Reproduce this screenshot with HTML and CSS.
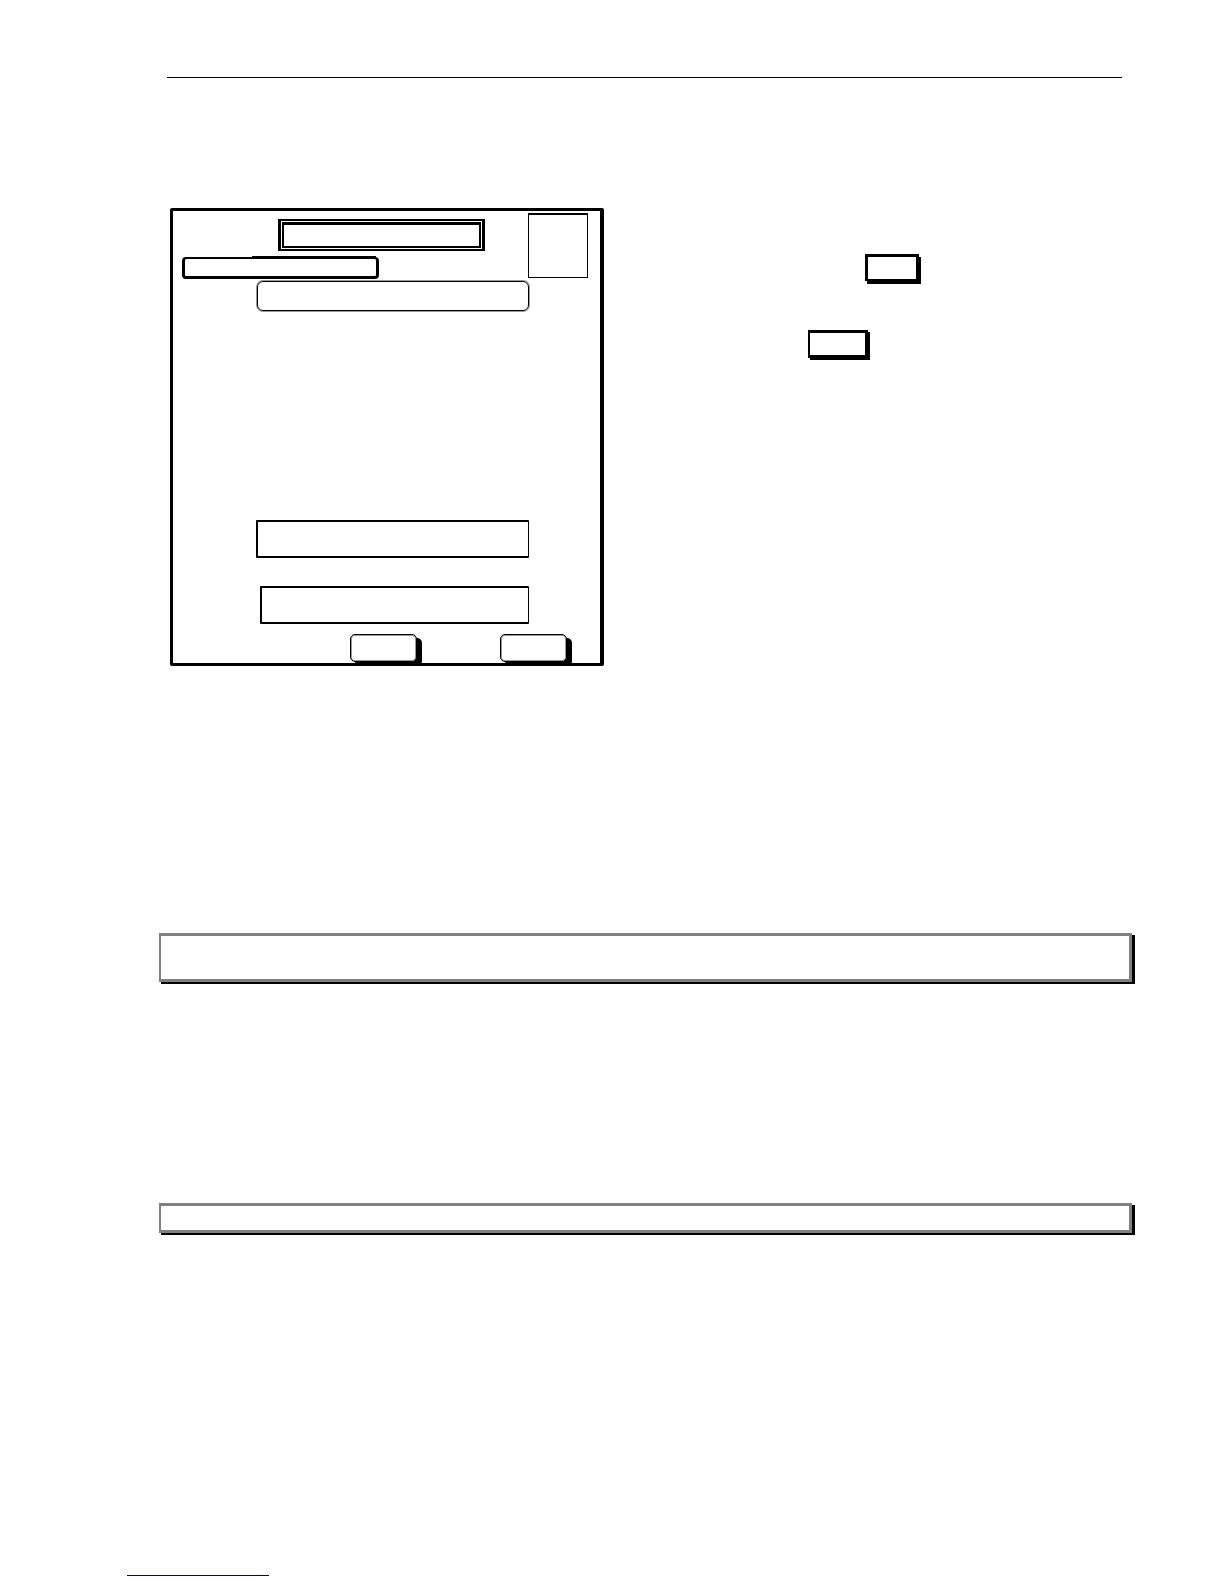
FILE: index.html
```
<!DOCTYPE html>
<html lang="en">
<head>
  <meta charset="utf-8">
  <meta name="viewport" content="width=device-width, initial-scale=1">
  <title>Operator manual</title>
  <link rel="stylesheet" href="styles.css">
</head>
<body>
  <main class="page">
    <hr class="page-rule">

    <div class="columns">
      <!-- Touch screen -->
      <section class="screen" aria-label="Screen">
        <div class="screen-head">
          <div class="head-main">
            <div class="screen-title"></div>
            <div class="screen-tab"></div>
          </div>
          <div class="screen-logo"></div>
        </div>

        <div class="screen-body">
          <div class="message"></div>
          <input class="field" type="text" aria-label="First value">
          <input class="field field-short" type="text" aria-label="Second value">
        </div>

        <div class="screen-buttons">
          <button class="soft-button" type="button" aria-label="Accept"></button>
          <button class="soft-button" type="button" aria-label="Exit"></button>
        </div>
      </section>

      <!-- Keys used in the steps -->
      <section class="steps" aria-label="Steps">
        <button class="key key-first" type="button" aria-label="First key"></button>
        <button class="key key-second" type="button" aria-label="Second key"></button>
      </section>
    </div>

    <aside class="note note-tall" aria-label="Note"></aside>
    <aside class="note" aria-label="Note"></aside>
  </main>

  <footer class="footer">
    <a class="footer-link" href="#" aria-label="Website"></a>
  </footer>
</body>
</html>
```
FILE: styles.css
```
*,
*::before {
  box-sizing: border-box;
}

body {
  margin: 0;
  background: #fff;
  color: #000;
  font-family: "Liberation Sans", Arial, sans-serif;
  font-size: 16px;
}

.page {
  padding: 77px 92px 0 159px;
}

.page-rule {
  height: 1px;
  margin: 0 10px 0 8px;
  border: 0;
  background: #000;
}

.columns {
  display: grid;
  grid-template-columns: minmax(0, 434px) minmax(0, 1fr);
  margin: 130px 10px 0 11px;
}

/* Touch screen */
.screen {
  border: 3px solid #000;
  border-right-width: 4px;
  border-radius: 2px;
}

.screen-head {
  display: flex;
  align-items: flex-start;
  padding: 2px 12px 0 9px;
}

.head-main {
  flex: 1;
  padding-top: 6px;
}

.screen-title {
  width: 207px;
  height: 32px;
  margin-left: 96px;
  padding: 1px;
  border: solid #000;
  border-width: 2px 3px;
}

/* inner frame of the title */
.screen-title::before {
  content: "";
  display: block;
  height: 100%;
  border: 2px solid #000;
  border-top-width: 3px;
}

.screen-tab {
  position: relative;
  width: 197px;
  height: 22px;
  margin-top: 6px;
  border: 3px solid #000;
  border-top-width: 2px;
  border-radius: 4px;
}

/* thicker part of the top edge */
.screen-tab::before {
  content: "";
  position: absolute;
  top: -3px;
  left: 67px;
  right: 0;
  height: 3px;
  background: #000;
}

.screen-logo {
  width: 60px;
  height: 65px;
  border: 1px solid #000;
  border-top-width: 2px;
}

.screen-body {
  display: flex;
  flex-direction: column;
  margin: 2px 71px 0 83px;
}

.message {
  height: 30px;
  margin-left: 1px;
  border: 1px solid #000;
  border-radius: 6px;
  box-shadow: 0 0 0 1px #999;
}

.field {
  height: 38px;
  margin-top: 209px;
  padding: 0 8px;
  border: 2px solid #000;
  border-right-width: 1px;
  border-radius: 1px;
  background: #fff;
  font: inherit;
}

.field-short {
  margin-top: 28px;
  margin-left: 4px;
}

.screen-buttons {
  display: flex;
  justify-content: flex-end;
  gap: 83px;
  padding: 10px 33px 1px 0;
}

.soft-button {
  width: 67px;
  height: 28px;
  padding: 0;
  border: 1px solid #000;
  border-radius: 5px;
  background: #fff;
  box-shadow: inset 0 0 0 1px #999, 5px 4px 0 #000;
}

/* Keys */
.steps {
  display: flex;
  flex-direction: column;
  align-items: flex-start;
  padding-top: 46px;
}

.key {
  padding: 0;
  border: 3px solid #000;
  background: #fff;
}

.key-first {
  width: 54px;
  height: 27px;
  margin-left: 261px;
  border-bottom-width: 2px;
  box-shadow: 2px 3px 0 #000;
}

.key-second {
  width: 60px;
  height: 28px;
  margin: 49px 0 0 204px;
  border-left-width: 2px;
  box-shadow: 2px 2px 0 #000;
}

/* Notes */
.note {
  min-height: 30px;
  margin-top: 221px;
  border: 3px solid #808080;
  border-left-width: 2px;
  box-shadow: 2px 2px 0 #000, 3px 2px 0 #000;
}

.note-tall {
  min-height: 49px;
  margin-top: 267px;
}

.footer {
  display: flex;
  padding: 325px 127px 8px;
}

.footer-link {
  width: 142px;
  height: 18px;
  border-bottom: 1px solid #000080;
}
```
